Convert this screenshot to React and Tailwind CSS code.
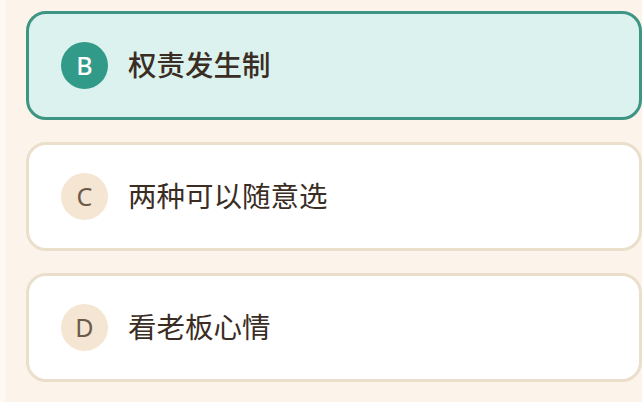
import React, { useState } from 'react';

const OPTIONS = [
  { key: 'B', label: '权责发生制' },
  { key: 'C', label: '两种可以随意选' },
  { key: 'D', label: '看老板心情' },
];

const OptionCard = ({ option, selected, onSelect }) => (
  <button
    type="button"
    onClick={() => onSelect(option.key)}
    className={`flex items-center h-[109px] w-[616px] rounded-[20px] border-[3px] pl-[32px] text-left ${
      selected
        ? 'bg-[#dcf2ee] border-[#3f9584]'
        : 'bg-white border-[#ebdfcc]'
    }`}
  >
    <span
      className={`flex items-center justify-center w-[47px] h-[47px] rounded-full text-[25px] leading-none ${
        selected ? 'bg-[#329a88] text-white font-medium' : 'bg-[#f5e6d3] text-[#6b5a4a]'
      }`}
    >
      {option.key}
    </span>
    <span
      className={`ml-[20px] text-[28.5px] leading-none text-[#3a2d24] ${selected ? 'font-medium' : 'font-normal'}`}
    >
      {option.label}
    </span>
  </button>
);

export default function App() {
  const [selected, setSelected] = useState('B');

  return (
    <div
      className="flex w-[642px] h-[402px] bg-[#fcf4eb] overflow-hidden"
      style={{ fontFamily: '"Noto Sans", "Noto Sans CJK SC", sans-serif' }}
    >
      <div className="w-[5px] shrink-0 bg-[#fdf9f5]" />
      <div className="flex flex-col gap-[22px] pt-[11px] pl-[21px]">
        {OPTIONS.map(opt => (
          <OptionCard
            key={opt.key}
            option={opt}
            selected={selected === opt.key}
            onSelect={setSelected}
          />
        ))}
      </div>
    </div>
  );
}
